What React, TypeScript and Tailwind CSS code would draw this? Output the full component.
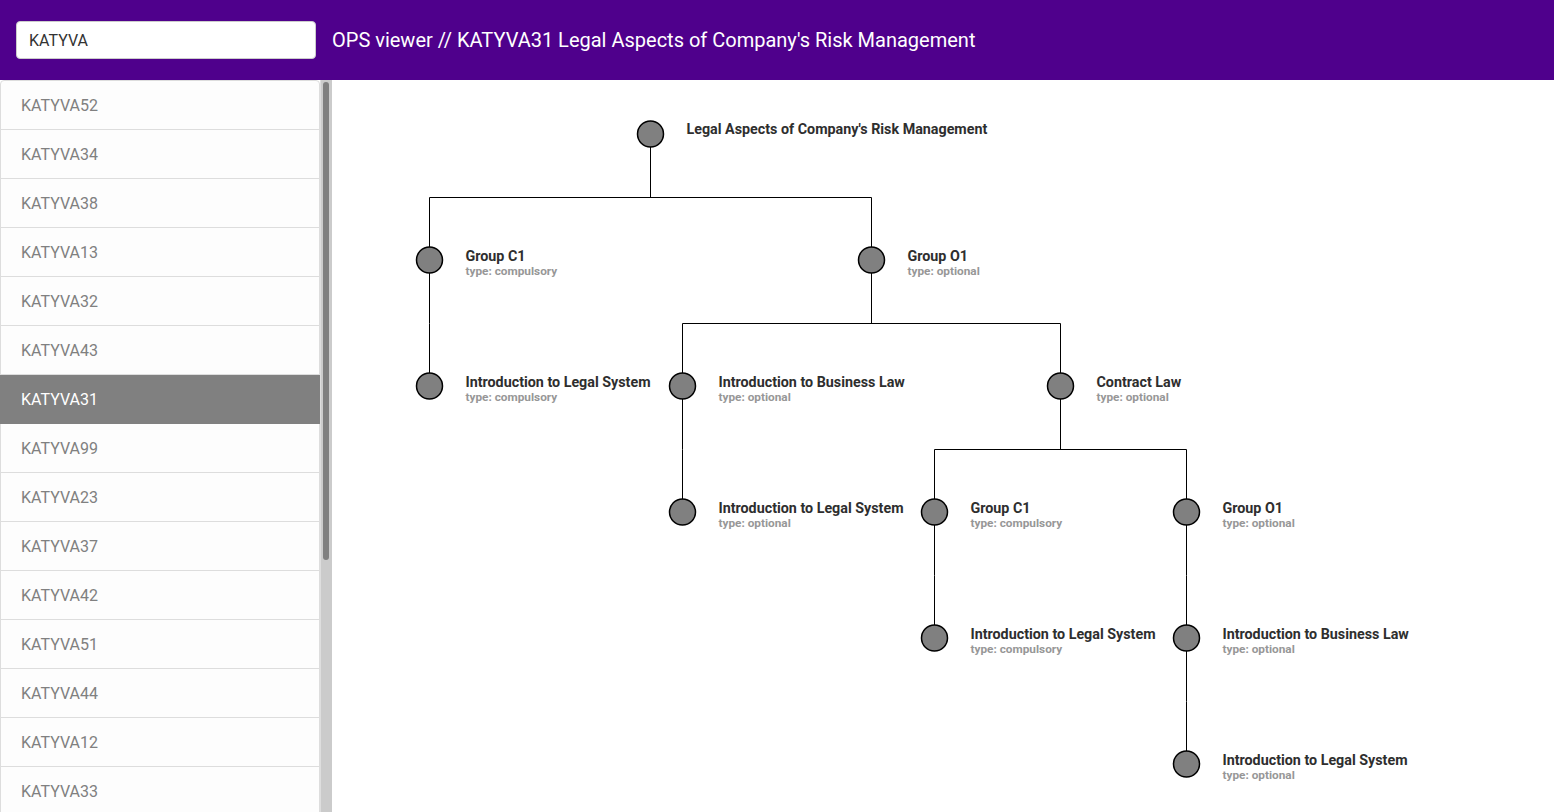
import React from "react";

const items = [
  "KATYVA52","KATYVA34","KATYVA38","KATYVA13","KATYVA32","KATYVA43","KATYVA31","KATYVA99",
  "KATYVA23","KATYVA37","KATYVA42","KATYVA51","KATYVA44","KATYVA12","KATYVA33","KATYVA11",
  "KATYVA21","KATYVA25","KATYVA46","KATYVA55","KATYVA61","KATYVA70","KATYVA88",
];

type N = { x: number; y: number; t: string; s?: string };
const nodes: N[] = [
  { x: 650, y: 134, t: "Legal Aspects of Company's Risk Management" },
  { x: 429, y: 260, t: "Group C1", s: "type: compulsory" },
  { x: 871, y: 260, t: "Group O1", s: "type: optional" },
  { x: 429, y: 386, t: "Introduction to Legal System", s: "type: compulsory" },
  { x: 682, y: 386, t: "Introduction to Business Law", s: "type: optional" },
  { x: 1060, y: 386, t: "Contract Law", s: "type: optional" },
  { x: 682, y: 512, t: "Introduction to Legal System", s: "type: optional" },
  { x: 934, y: 512, t: "Group C1", s: "type: compulsory" },
  { x: 1186, y: 512, t: "Group O1", s: "type: optional" },
  { x: 934, y: 638, t: "Introduction to Legal System", s: "type: compulsory" },
  { x: 1186, y: 638, t: "Introduction to Business Law", s: "type: optional" },
  { x: 1186, y: 764, t: "Introduction to Legal System", s: "type: optional" },
];

const links: [number, number[]][] = [
  [0, [1, 2]],
  [1, [3]],
  [2, [4, 5]],
  [4, [6]],
  [5, [7, 8]],
  [7, [9]],
  [8, [10]],
  [10, [11]],
];

function Tree() {
  return (
    <svg width="1222" height="732" className="block">
      <g transform="translate(-332,-80)">
        {links.map(([p, cs], i) => {
          const pn = nodes[p];
          const my = pn.y + 63.5;
          const xs = cs.map((c) => nodes[c].x);
          const d =
            `M${pn.x + 0.5},${pn.y} V${my} ` +
            (cs.length > 1 ? `M${Math.min(...xs) + 0.5},${my} H${Math.max(...xs) + 0.5} ` : "") +
            cs.map((c) => `M${nodes[c].x + 0.5},${my} V${nodes[c].y}`).join(" ");
          return <path key={i} d={d} stroke="#000" strokeWidth="1" fill="none" />;
        })}
        {nodes.map((n, i) => (
          <g key={i}>
            <circle cx={n.x + 0.5} cy={n.y} r="13" fill="#808080" stroke="#000" strokeWidth="1.5" />
            <text
              x={n.x + 36.5}
              y={n.s ? n.y + 1 : n.y}
              fontFamily="Roboto, sans-serif"
              fontSize="14.3"
              fontWeight="700"
              fill="#2e2e2e"
            >
              {n.t}
            </text>
            {n.s && (
              <text
                x={n.x + 36.5}
                y={n.y + 15}
                fontFamily="Roboto, sans-serif"
                fontSize="11.8"
                fontWeight="700"
                fill="#979797"
              >
                {n.s}
              </text>
            )}
          </g>
        ))}
      </g>
    </svg>
  );
}

export default function App() {
  return (
    <div className="h-[812px] w-[1554px] flex flex-col overflow-hidden bg-white font-['Roboto',sans-serif]">
      <header className="h-[80px] shrink-0 bg-[#4f008c] flex items-center pl-[16px]">
        <div className="w-[300px] h-[38px] bg-white rounded-[4px] border border-[#ccc] flex items-center pl-[12px] pt-[2px] text-[16px] text-[#333]">
          KATYVA
        </div>
        <div className="ml-[16px] text-[20px] text-white">
          OPS viewer // KATYVA31 Legal Aspects of Company's Risk Management
        </div>
      </header>
      <div className="flex-1 flex min-h-0">
        <div className="w-[320px] shrink-0 overflow-hidden">
          <ul className="border border-[#ddd] rounded-t-[4px] bg-[#fdfdfd]">
            {items.map((it) => {
              const sel = it === "KATYVA31";
              return (
                <li
                  key={it}
                  className={
                    sel
                      ? "h-[49px] flex items-center pt-[2px] pl-[21px] -mx-px text-[16px] bg-[#808080] text-white border-b border-[#808080]"
                      : "h-[49px] flex items-center pt-[2px] pl-[20px] text-[16px] text-[#808080] border-b border-[#ddd]"
                  }
                >
                  {it}
                </li>
              );
            })}
          </ul>
        </div>
        <div className="w-[12px] shrink-0 bg-[#cbcbcb] border-l border-[#dedede] pt-[2px] pl-[2px]">
          <div className="w-[6px] h-[478px] rounded-full bg-[#7f7f7f]" />
        </div>
        <main className="flex-1 relative overflow-hidden">
          <Tree />
        </main>
      </div>
    </div>
  );
}
